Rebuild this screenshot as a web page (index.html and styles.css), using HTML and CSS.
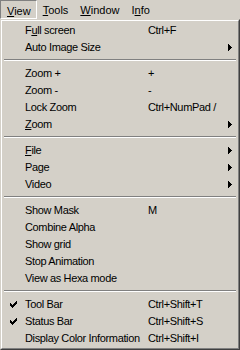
FILE: index.html
```html
<!DOCTYPE html>
<html>
<head>
<meta charset="utf-8">
<link rel="stylesheet" href="styles.css">
</head>
<body>
<div class="menubar">
    <span class="bar-item is-open"><u>V</u>iew</span>
    <span class="bar-item"><u>T</u>ools</span>
    <span class="bar-item"><u>W</u>indow</span>
    <span class="bar-item">I<u>n</u>fo</span>
</div>
<div class="menu">
<div class="menu-inner">
    <div class="item"><span class="check"></span><span class="label">F<u>u</u>ll screen</span><span class="key">Ctrl+F</span></div>
    <div class="item"><span class="check"></span><span class="label">Auto Image Size</span><span class="key"></span><svg class="arrow" width="4" height="7"><path d="M0 0h1v7h-1z M1 1h1v5h-1z M2 2h1v3h-1z M3 3h1v1h-1z"/></svg></div>
    <div class="sep"></div>
    <div class="item"><span class="check"></span><span class="label">Zoom +</span><span class="key">+</span></div>
    <div class="item"><span class="check"></span><span class="label">Zoom -</span><span class="key">-</span></div>
    <div class="item"><span class="check"></span><span class="label">Lock Zoom</span><span class="key">Ctrl+NumPad /</span></div>
    <div class="item"><span class="check"></span><span class="label"><u>Z</u>oom</span><span class="key"></span><svg class="arrow" width="4" height="7"><path d="M0 0h1v7h-1z M1 1h1v5h-1z M2 2h1v3h-1z M3 3h1v1h-1z"/></svg></div>
    <div class="sep"></div>
    <div class="item"><span class="check"></span><span class="label"><u>F</u>ile</span><span class="key"></span><svg class="arrow" width="4" height="7"><path d="M0 0h1v7h-1z M1 1h1v5h-1z M2 2h1v3h-1z M3 3h1v1h-1z"/></svg></div>
    <div class="item"><span class="check"></span><span class="label">Page</span><span class="key"></span><svg class="arrow" width="4" height="7"><path d="M0 0h1v7h-1z M1 1h1v5h-1z M2 2h1v3h-1z M3 3h1v1h-1z"/></svg></div>
    <div class="item"><span class="check"></span><span class="label">Video</span><span class="key"></span><svg class="arrow" width="4" height="7"><path d="M0 0h1v7h-1z M1 1h1v5h-1z M2 2h1v3h-1z M3 3h1v1h-1z"/></svg></div>
    <div class="sep"></div>
    <div class="item"><span class="check"></span><span class="label">Show Mask</span><span class="key">M</span></div>
    <div class="item"><span class="check"></span><span class="label">Combine Alpha</span><span class="key"></span></div>
    <div class="item"><span class="check"></span><span class="label">Show grid</span><span class="key"></span></div>
    <div class="item"><span class="check"></span><span class="label">Stop Animation</span><span class="key"></span></div>
    <div class="item"><span class="check"></span><span class="label">View as Hexa mode</span><span class="key"></span></div>
    <div class="sep"></div>
    <div class="item"><svg class="check" width="7" height="7"><path d="M6 0h1v1h-1z M5 1h2v1h-2z M0 2h1v1h-1z M4 2h3v1h-3z M0 3h2v1h-2z M3 3h3v1h-3z M0 4h5v1h-5z M1 5h3v1h-3z M2 6h1v1h-1z"/></svg><span class="label">Tool Bar</span><span class="key">Ctrl+Shift+T</span></div>
    <div class="item"><svg class="check" width="7" height="7"><path d="M6 0h1v1h-1z M5 1h2v1h-2z M0 2h1v1h-1z M4 2h3v1h-3z M0 3h2v1h-2z M3 3h3v1h-3z M0 4h5v1h-5z M1 5h3v1h-3z M2 6h1v1h-1z"/></svg><span class="label">Status Bar</span><span class="key">Ctrl+Shift+S</span></div>
    <div class="item"><span class="check"></span><span class="label">Display Color Information</span><span class="key">Ctrl+Shift+I</span></div>
</div>
</div>
</body>
</html>
```

FILE: styles.css
```css
html, body {margin: 0; padding: 0; background: #d4d0c8;}
body {font: 11px "Liberation Sans", Arial, sans-serif; letter-spacing: -0.35px; color: #000;}
u {text-decoration: underline; text-underline-offset: 1px;}

.menubar {display: flex; height: 19px; background: #d4d0c8;}
.bar-item {box-sizing: border-box; height: 19px; padding: 2px 6px 0; line-height: 17px; letter-spacing: 0; white-space: nowrap;}
.bar-item.is-open {border: 1px solid; border-color: #808080 #fff #fff #808080; padding: 2px 5px 0 6px;}

.menu {width: 240px; box-sizing: border-box; border: 1px solid; border-color: #d4d0c8 #404040 #404040 #d4d0c8;}
.menu-inner {border: 1px solid; border-color: #fff #808080 #808080 #fff; padding: 1px;}

.item {display: grid; grid-template-columns: 22px 123px 1fr 14px; align-items: center; height: 17px; line-height: 17px; white-space: nowrap;}
.item .check {justify-self: start; margin-left: 7px; fill: #000; shape-rendering: crispEdges;}
.item .arrow {justify-self: start; margin-left: 5px; fill: #000; shape-rendering: crispEdges;}

.sep {height: 9px; box-sizing: border-box; padding-top: 3px; margin: 0 1px;}
.sep::before {content: ""; display: block; height: 0; border-top: 1px solid #808080; border-bottom: 1px solid #fff;}
```
